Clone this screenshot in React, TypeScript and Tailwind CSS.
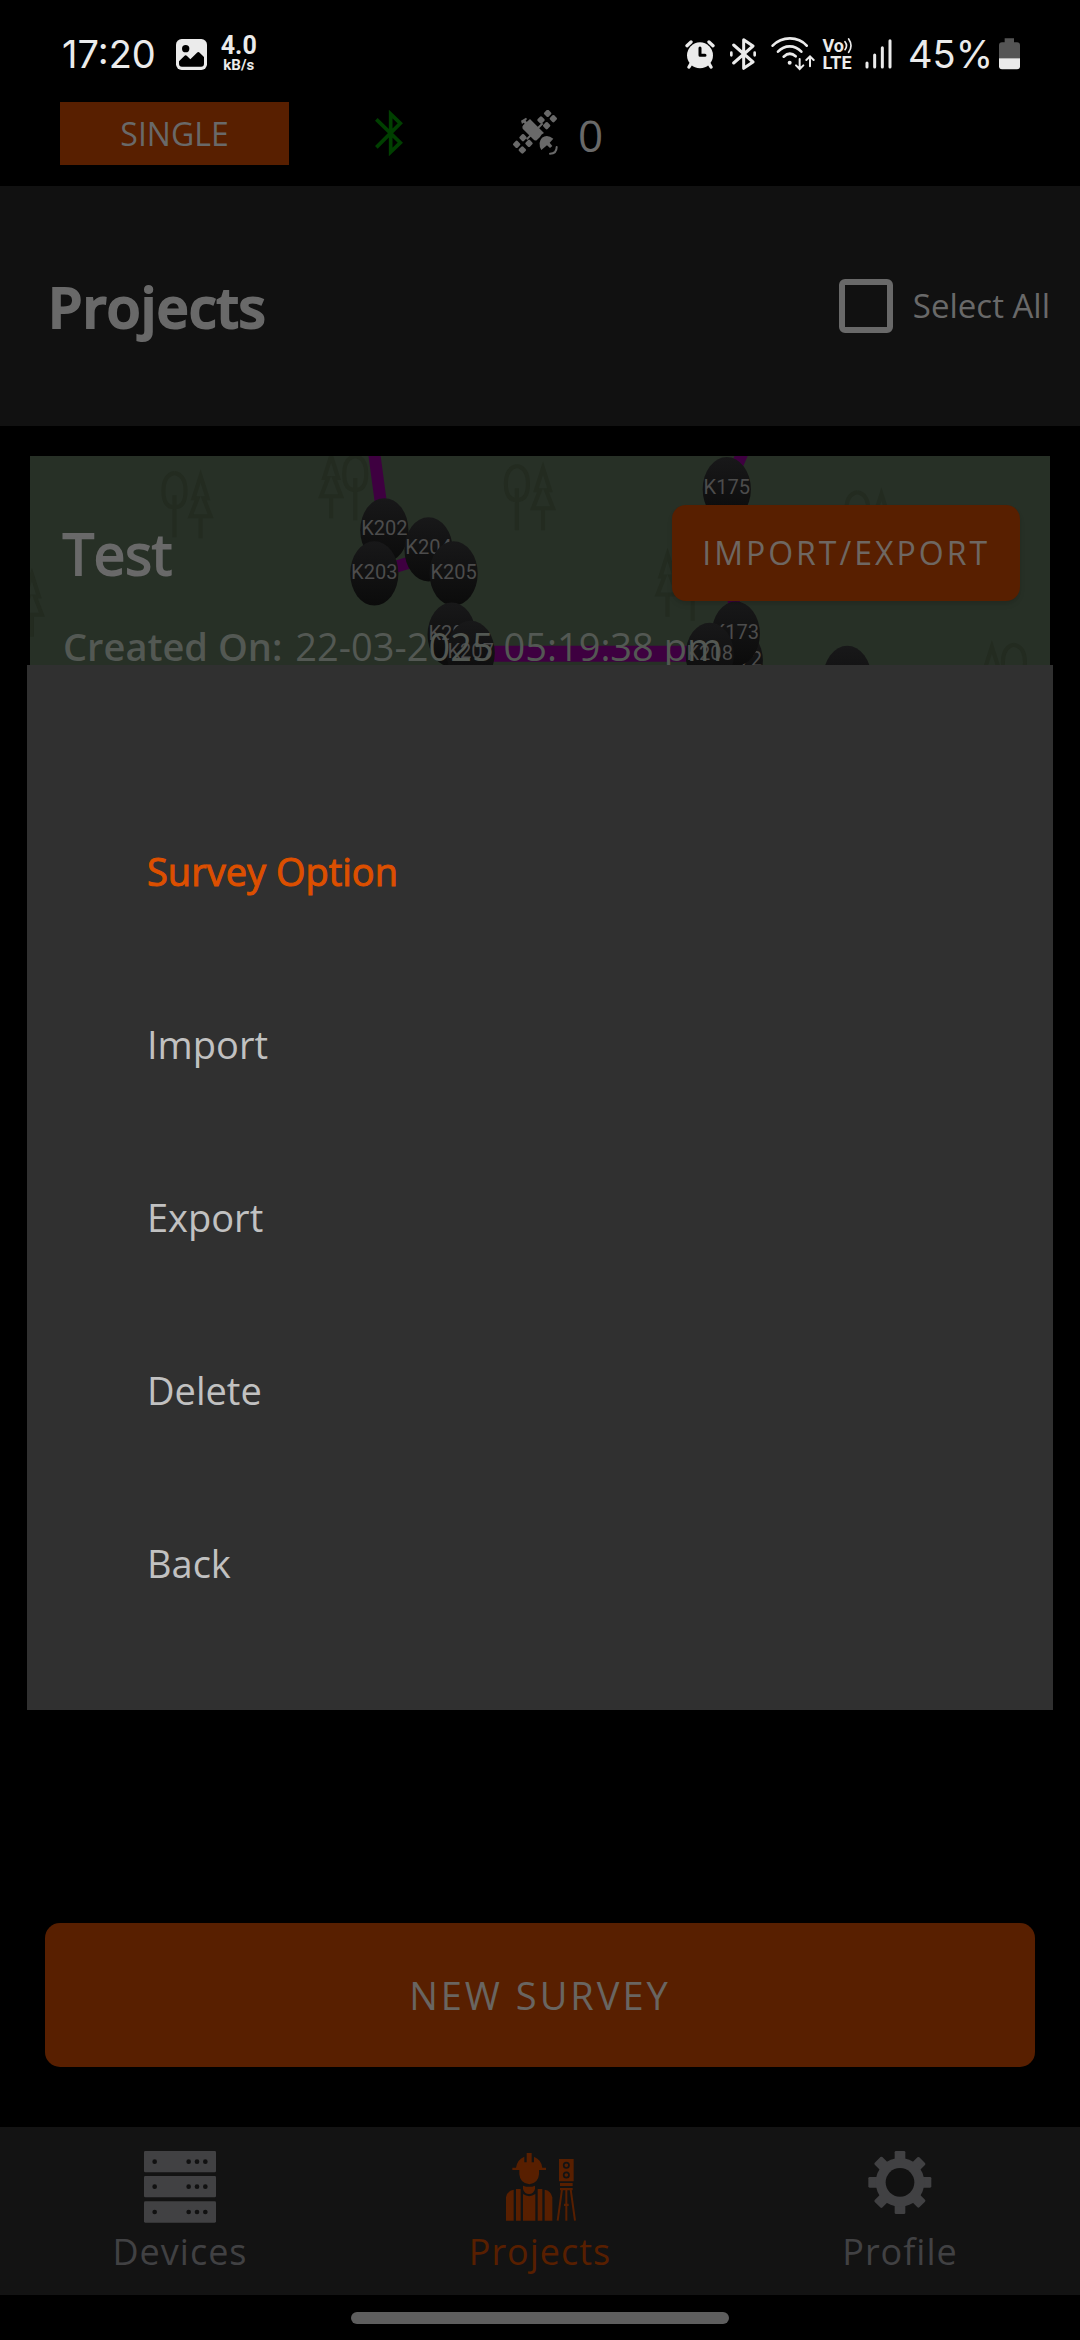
import { useState } from "react";

interface Marker {
  label: string;
  x: number;
  y: number;
}

const menuItems = ["Import", "Export", "Delete", "Back"];

const markers: Marker[] = [
  { label: "K202", x: 355, y: 74 },
  { label: "K204", x: 399, y: 93 },
  { label: "K203", x: 345, y: 117 },
  { label: "K205", x: 424, y: 117 },
  { label: "K206", x: 422, y: 178 },
  { label: "K207", x: 441, y: 196 },
  { label: "K175", x: 696, y: 33 },
  { label: "K172", x: 708, y: 204 },
  { label: "K173", x: 705, y: 177 },
  { label: "K208", x: 679, y: 198 },
  { label: "K171", x: 816, y: 221 },
];

const trees = [
  [146, 17, 172, 20],
  [326, 0, 302, 0],
  [487, 10, 513, 12],
  [662, 100, 637, 98],
  [826, 36, 850, 38],
  [982, 188, 960, 190],
  [-24, 116, 4, 118],
];

function StatusBar() {
  return (
    <div className="flex items-center justify-between pt-7 pl-[62px] pr-[60px] text-[#ebebeb]">
      <div className="flex h-[52px] items-center">
        <span className="font-['Inter',sans-serif] text-[38px] leading-none">17:20</span>
        <svg className="ml-5 h-[31px] w-[31px]" viewBox="525 117 93 93">
          <rect x="525" y="117" width="93" height="93" rx="17" fill="currentColor" />
          <circle cx="554" cy="146" r="11" fill="#000" />
          <path d="M534 184 L550 168 Q554 164 558 168 L568 178 L588 158 Q592 154 596 158 L609 171 V191 Q609 200 600 200 H543 Q534 200 534 191 Z" fill="#000" />
        </svg>
        <div className="ml-[14px] flex flex-col items-center font-['Roboto',sans-serif] font-bold">
          <span className="text-[25px] leading-[22px]">4.0</span>
          <span className="text-[15px] leading-4">kB/s</span>
        </div>
      </div>

      <div className="flex h-[52px] items-center">
        {/* Alarm */}
        <svg className="h-[30px] w-[30px]" viewBox="70 56 90 90" fill="none" stroke="currentColor" strokeLinecap="round">
          <circle cx="115" cy="105" r="39" fill="currentColor" stroke="none" />
          <path d="M76 76 L88 65 M154 76 L142 65 M88 130 L82 140 M142 130 L148 140" strokeWidth="10" />
          <path d="M115 83 V105 H130" stroke="#000" strokeWidth="9" strokeLinejoin="round" />
        </svg>
        {/* Bluetooth */}
        <svg className="ml-[14px] h-8 w-[28px]" viewBox="204 54 84 96" fill="none" stroke="currentColor" strokeLinecap="round" strokeLinejoin="round" strokeWidth="9">
          <path d="M218 75 L276 126 L248 145 V59 L276 78 L218 129" />
          <path d="M211 98 V106 M281 98 V106" strokeWidth="8" />
        </svg>
        {/* Wifi */}
        <svg className="ml-[14px] h-[34px] w-[44px]" viewBox="329 50 132 102" fill="none" stroke="currentColor" strokeLinecap="round" strokeWidth="8">
          <path d="M334 76 C362 47 410 47 436 76" />
          <path d="M350 94 C370 73 400 73 420 94" />
          <path d="M367 109 C379 98 392 98 403 108" />
          <circle cx="385" cy="127" r="6" fill="currentColor" stroke="none" />
          <path d="M415 116 V145 M404 135 L415 146 L426 135 M446 138 V110 M435 119 L446 108 L457 119" strokeWidth="6" />
        </svg>
        <div className="ml-2 flex flex-col font-['Roboto',sans-serif] text-[18px] leading-[17px] font-bold">
          <span className="flex">
            Vo
            <svg className="h-[17px] w-[9px]" viewBox="2 0 27 51" fill="none" stroke="currentColor" strokeWidth="5" strokeLinecap="round">
              <path d="M5 14 Q14 26 5 38 M16 6 Q30 26 16 46" />
            </svg>
          </span>
          <span>LTE</span>
        </div>
        {/* Signal */}
        <svg className="ml-3 h-[30px] w-[27px]" viewBox="618 56 81 90" fill="none" stroke="currentColor" strokeLinecap="round" strokeWidth="9">
          <path d="M624 128 V140 M647 104 V140 M670 82 V140 M693 61 V140" />
        </svg>
        <span className="ml-4 font-['Inter',sans-serif] text-[38px] leading-none">45%</span>
        {/* Battery */}
        <svg className="ml-[6px] h-8 w-[21px]" viewBox="1014 53 63 96">
          <path d="M1031 54 H1059 V66 H1068 Q1077 66 1077 75 V114 H1014 V75 Q1014 66 1023 66 H1031 Z" fill="#555" />
          <path d="M1014 114 H1077 V138 Q1077 147 1068 147 H1023 Q1014 147 1014 138 Z" fill="currentColor" />
        </svg>
      </div>
    </div>
  );
}

function SatelliteIcon() {
  const panels = [
    [621, 62], [638, 78], [601, 82], [618, 99],
    [547, 135], [565, 152], [528, 155], [545, 172],
  ];
  return (
    <svg className="h-[46px] w-[46px]" viewBox="514 52 138 138" fill="#696969">
      {panels.map(([x, y]) => (
        <rect key={`${x}-${y}`} x={x - 9} y={y - 9} width="18" height="18" rx="4" transform={`rotate(45 ${x} ${y})`} />
      ))}
      <path d="M568 79 L610 121 Q602 124 598 133 L588 143 Q582 145 577 139 L546 108 Q543 102 548 97 Z" />
      <path d="M541 84 L556 75 L559 79 L555 84 L562 91 L556 97 L549 90 L544 94 Z" />
      <path d="M592 106 L606 92 M558 140 L572 126" stroke="#696969" strokeWidth="6" />
      <path d="M602 172 Q590 150 604 135 Q620 124 638 138 L627 150 L635 160 L628 166 L619 158 Z" />
      <path d="M648 163 Q648 183 628 183" fill="none" stroke="#696969" strokeWidth="6" strokeLinecap="round" />
    </svg>
  );
}

function AppBar() {
  return (
    <div className="flex h-[106px] items-center pl-[60px] text-[#696969]">
      <button className="h-[63px] w-[229px] bg-[#581f00] pt-px text-[32px] leading-none">SINGLE</button>
      <svg className="ml-[86px] h-[46px] w-[29px]" viewBox="106 62 87 138" fill="none" stroke="#003f00" strokeWidth="11">
        <path d="M110 90 L182 160 L153 188 V74 L182 102 L110 174" />
      </svg>
      <div className="ml-[108px] flex items-center gap-5 text-[44px] leading-none">
        <SatelliteIcon />
        <span className="pt-1">0</span>
      </div>
    </div>
  );
}

function MapBackdrop() {
  return (
    <svg className="absolute inset-0 h-full w-full" viewBox="0 0 1020 240" preserveAspectRatio="xMidYMin slice">
      <defs>
        <linearGradient id="pin" x1="0" y1="0" x2="0" y2="1">
          <stop offset="0" stopColor="#181819" />
          <stop offset="1" stopColor="#0b0b0b" />
        </linearGradient>
      </defs>
      <rect width="1020" height="240" fill="#273026" />
      <g fill="none" stroke="#232b20" strokeWidth="4">
        {trees.map(([rx, ry, cx, cy]) => (
          <g key={rx}>
            <path d={`M${rx} ${ry} q-11 2 -11 18 q0 16 11 16 q11 0 11 -16 q0 -16 -11 -18 M${rx} ${ry + 22} v42`} />
            <path d={`M${cx} ${cy} l-7 22 h4 l-7 18 h20 l-7 -18 h4 z M${cx} ${cy + 40} v22`} />
          </g>
        ))}
      </g>
      <g fill="none" stroke="#3e0040">
        <path d="M345 -2 L352 50 M345 117 L399 100" strokeWidth="12" />
        <path d="M712 -4 L696 33 M696 33 L705 177" strokeWidth="12" />
        <path d="M441 197 H679" strokeWidth="16" />
      </g>
      {markers.map((m) => (
        <g key={m.label}>
          <ellipse cx={m.x} cy={m.y} rx="24" ry="32" fill="url(#pin)" />
          <text x={m.x} y={m.y + 5} textAnchor="middle" fill="#4c4c4c" className="font-['Roboto',sans-serif] text-[20px]">
            {m.label}
          </text>
        </g>
      ))}
    </svg>
  );
}

function ProjectCard() {
  return (
    <div className="relative overflow-hidden pt-[49px] pr-[30px] pb-6 pl-[33px]">
      <MapBackdrop />
      <div className="relative flex items-center justify-between">
        <h2 className="text-[56px] leading-none font-medium text-[#696969] [-webkit-text-stroke:2px]">Test</h2>
        <button className="h-24 rounded-[14px] bg-[#581f00] px-[30px] text-[32px] tracking-[3px] text-[#6e6762] shadow-md">
          IMPORT/EXPORT
        </button>
      </div>
      <p className="relative mt-[18px] flex gap-[13px] text-[38px] leading-[54px] text-[#535853]">
        <span className="font-semibold">Created On:</span>
        <span>22-03-2025 05:19:38 pm</span>
      </p>
    </div>
  );
}

function DevicesIcon() {
  return (
    <svg className="h-[72px] w-[72px]" viewBox="0 0 216 216">
      {[0, 75, 151].map((y) => (
        <g key={y}>
          <rect y={y} width="216" height="64" rx="4" fill="#414143" />
          {[32, 134, 159, 184].map((x) => (
            <circle key={x} cx={x} cy={y + 32} r="7" fill="#111" />
          ))}
        </g>
      ))}
    </svg>
  );
}

function SurveyorIcon() {
  return (
    <svg className="h-[72px] w-[72px]" viewBox="252 123 216 216" fill="#581f00">
      {/* Helmet and head */}
      <path d="M320 129 H335 V157 H342 V140 Q365 150 367 173 H378 V180 H357 V193 Q355 220 328 223 Q300 220 298 193 V180 H277 V173 H288 Q292 148 313 140 V157 H320 Z" />
      <path d="M309 227 Q328 234 345 227 V237 Q341 252 327 252 Q313 252 309 237 Z" />
      {/* Vest */}
      <path d="M281 239 V332 H258 V262 Q262 242 281 239 Z M374 239 V332 H397 V262 Q393 242 374 239 Z" />
      <path d="M288 237 H302 V332 H288 Z M353 237 H367 V332 H353 Z" />
      <path d="M309 252 Q327 265 346 252 V332 H309 Z" />
      {/* Total station on tripod */}
      <path d="M417 147 H461 V214 H417 Z M420 219 H458 V228 H420 Z M420 234 H458 V241 H420 Z" />
      <circle cx="439" cy="166" r="8" fill="#581f00" stroke="#131313" strokeWidth="5" />
      <circle cx="439" cy="195" r="8" fill="#581f00" stroke="#131313" strokeWidth="5" />
      <path d="M426 238 L413 332 M452 238 L465 332" stroke="#581f00" strokeWidth="6" />
      <path d="M436 238 H442 V332 H436 Z M432 281 H446 V288 H432 Z" />
    </svg>
  );
}

function GearIcon() {
  return (
    <svg className="h-[72px] w-[72px]" viewBox="252 123 216 216" fill="#414143">
      {[0, 45, 90, 135].map((angle) => (
        <rect key={angle} x="344" y="123" width="32" height="189" rx="4" transform={`rotate(${angle} 360 217)`} />
      ))}
      <circle cx="360" cy="217" r="73" />
      <circle cx="360" cy="217" r="43" fill="#111" />
    </svg>
  );
}

function BottomNav() {
  return (
    <nav className="grid grid-cols-3 bg-[#131313] pt-6 pb-[19px] text-[36px] leading-[48px] tracking-[1px] text-[#414143]">
      <a href="#devices" className="flex flex-col items-center gap-[5px]">
        <DevicesIcon />
        Devices
      </a>
      <a href="#projects" className="flex flex-col items-center gap-[5px] text-[#581f00]">
        <SurveyorIcon />
        Projects
      </a>
      <a href="#profile" className="flex flex-col items-center gap-[5px]">
        <GearIcon />
        Profile
      </a>
    </nav>
  );
}

function SurveyOptionDialog() {
  return (
    <div className="absolute inset-0 flex items-center px-[27px] pt-20 pb-[45px]">
      <div role="dialog" aria-labelledby="survey-option" className="w-full bg-[#303030] px-[120px] pt-[120px] pb-[60px] text-[38px]">
        <h3 id="survey-option" className="flex h-[173px] items-center font-medium text-[#dc4f00] [-webkit-text-stroke:1px]">
          Survey Option
        </h3>
        {menuItems.map((item) => (
          <button key={item} className="flex h-[173px] w-full items-center text-left text-[#c1c1c1]">
            {item}
          </button>
        ))}
      </div>
    </div>
  );
}

export default function App() {
  const [selectAll, setSelectAll] = useState(false);

  return (
    <div className="relative flex min-h-screen flex-col bg-black font-['Open_Sans',sans-serif]">
      <StatusBar />
      <AppBar />

      {/* Header */}
      <header className="flex h-60 items-center justify-between bg-[#111] pr-[30px] pl-12 text-[#696969]">
        <h1 className="text-[56px] leading-none font-semibold [-webkit-text-stroke:2px]">Projects</h1>
        <label className="flex items-center gap-5 text-[33px] font-medium">
          <input
            type="checkbox"
            checked={selectAll}
            onChange={(e) => setSelectAll(e.target.checked)}
            className="h-[54px] w-[54px] appearance-none rounded-md border-[6px] border-[#696969] checked:bg-[#581f00]"
          />
          Select All
        </label>
      </header>

      <main className="flex flex-1 flex-col justify-between px-[30px] pt-[30px] pb-[60px]">
        <ProjectCard />
        <button className="mx-[15px] h-36 rounded-[15px] bg-[#581f00] text-[38px] tracking-[3px] text-[#696561]">
          NEW SURVEY
        </button>
      </main>

      <BottomNav />
      <div className="flex h-[45px] justify-center pt-[17px]">
        <div className="h-3 w-[35%] rounded-full bg-[#5e5e5e]" />
      </div>

      <SurveyOptionDialog />
    </div>
  );
}
